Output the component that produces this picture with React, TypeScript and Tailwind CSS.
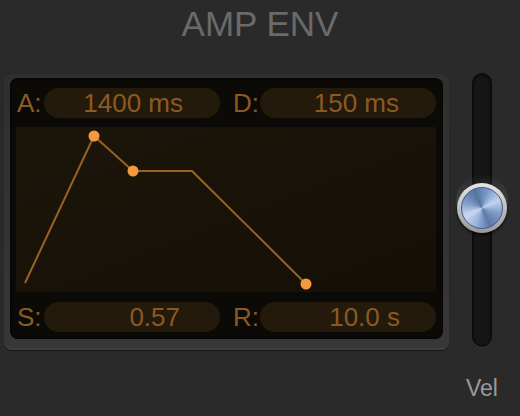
import React from "react";

const font = { fontFamily: '"Liberation Sans", Arial, sans-serif' };

export default function App() {
  return (
    <div
      className="flex h-[416px] w-[520px] flex-col overflow-hidden bg-[#2a2a2a]"
      style={font}
    >
      <div className="h-[73px] pt-[6px] text-center text-[35px] leading-none text-[#6a6a6a]">
        AMP ENV
      </div>
      <div className="flex items-start pl-[4px]">
        {/* Bezel */}
        <div className="mt-[1px] h-[276px] w-[445px] rounded-[8px] bg-gradient-to-b from-[#2f2f2f] to-[#373737] pb-[11px] pl-[6px] pr-[6px] pt-[4px] shadow-[inset_0_-2px_2px_rgba(255,255,255,0.04),0_1px_1px_rgba(0,0,0,0.5)]">
          {/* Screen */}
          <div className="flex h-[261px] w-[433px] flex-col rounded-[8px] bg-[#0c0a06] shadow-[inset_0_0_3px_rgba(0,0,0,0.9)]">
            <div className="flex items-center px-[7px] pt-[10px]">
              <div className="w-[27px] text-[26px] leading-none text-[#8a5a22]">A:</div>
              <div className="flex h-[30px] w-[176px] items-center justify-end rounded-full bg-[#241a0b] pr-[37px] text-[26px] leading-none text-[#8a5a22]">
                1400 ms
              </div>
              <div className="w-[40px] pl-[13px] text-[26px] leading-none text-[#8a5a22]">D:</div>
              <div className="flex h-[30px] w-[176px] items-center justify-end rounded-full bg-[#241a0b] pr-[37px] text-[26px] leading-none text-[#8a5a22]">
                150 ms
              </div>
            </div>
            <div className="ml-[6px] mt-[9px] h-[165px] w-[420px] bg-gradient-to-br from-[#1c150a] to-[#150f06]">
              <svg width="420" height="165" viewBox="0 0 420 165">
                <polyline
                  points="9,156 78,9 117,44 176,44 290,157"
                  fill="none"
                  stroke="#9a6222"
                  strokeWidth="2"
                  strokeLinejoin="round"
                />
                <circle cx="78" cy="9" r="5.5" fill="#f29a3c" />
                <circle cx="117" cy="44" r="5.5" fill="#f29a3c" />
                <circle cx="290" cy="157" r="5.5" fill="#f29a3c" />
              </svg>
            </div>
            <div className="mt-[10px] flex items-center px-[7px]">
              <div className="w-[27px] text-[26px] leading-none text-[#8a5a22]">S:</div>
              <div className="flex h-[30px] w-[176px] items-center justify-end rounded-full bg-[#241a0b] pr-[40px] text-[26px] leading-none text-[#8a5a22]">
                0.57
              </div>
              <div className="w-[40px] pl-[13px] text-[26px] leading-none text-[#8a5a22]">R:</div>
              <div className="flex h-[30px] w-[176px] items-center justify-end rounded-full bg-[#241a0b] pr-[36px] text-[26px] leading-none text-[#8a5a22]">
                10.0 s
              </div>
            </div>
          </div>
        </div>
        {/* Slider */}
        <div className="ml-[3px] flex w-[60px] flex-col items-center">
          <div className="relative h-[274px] w-[20px] rounded-full border border-[#0a0a0a] bg-[#161616] shadow-[0_1px_0_rgba(255,255,255,0.08),inset_0_1px_3px_rgba(0,0,0,0.8)]">
            <div className="absolute left-1/2 top-[101px] h-[50px] w-[52px] -translate-x-1/2 rounded-full bg-gradient-to-b from-transparent via-[#4a4a4a] to-[#7a7a7a] opacity-70" />
            <div className="absolute left-1/2 top-[109px] flex h-[50px] w-[50px] -translate-x-1/2 items-center justify-center rounded-full bg-gradient-to-b from-[#e6e6e6] to-[#9a9a9a] shadow-[0_2px_3px_rgba(0,0,0,0.6)]">
              <div className="h-[42px] w-[42px] rounded-full border border-[#3f5c8c] bg-[conic-gradient(from_20deg,#7d9bc9,#c2d3ee,#7f9bc6,#5a78aa,#9ab3da,#c8d7ef,#7e9ac6,#56739f,#7d9bc9)]" />
            </div>
          </div>
          <div className="mt-[30px] text-[23px] leading-none text-[#9a9a9a]">Vel</div>
        </div>
      </div>
    </div>
  );
}
